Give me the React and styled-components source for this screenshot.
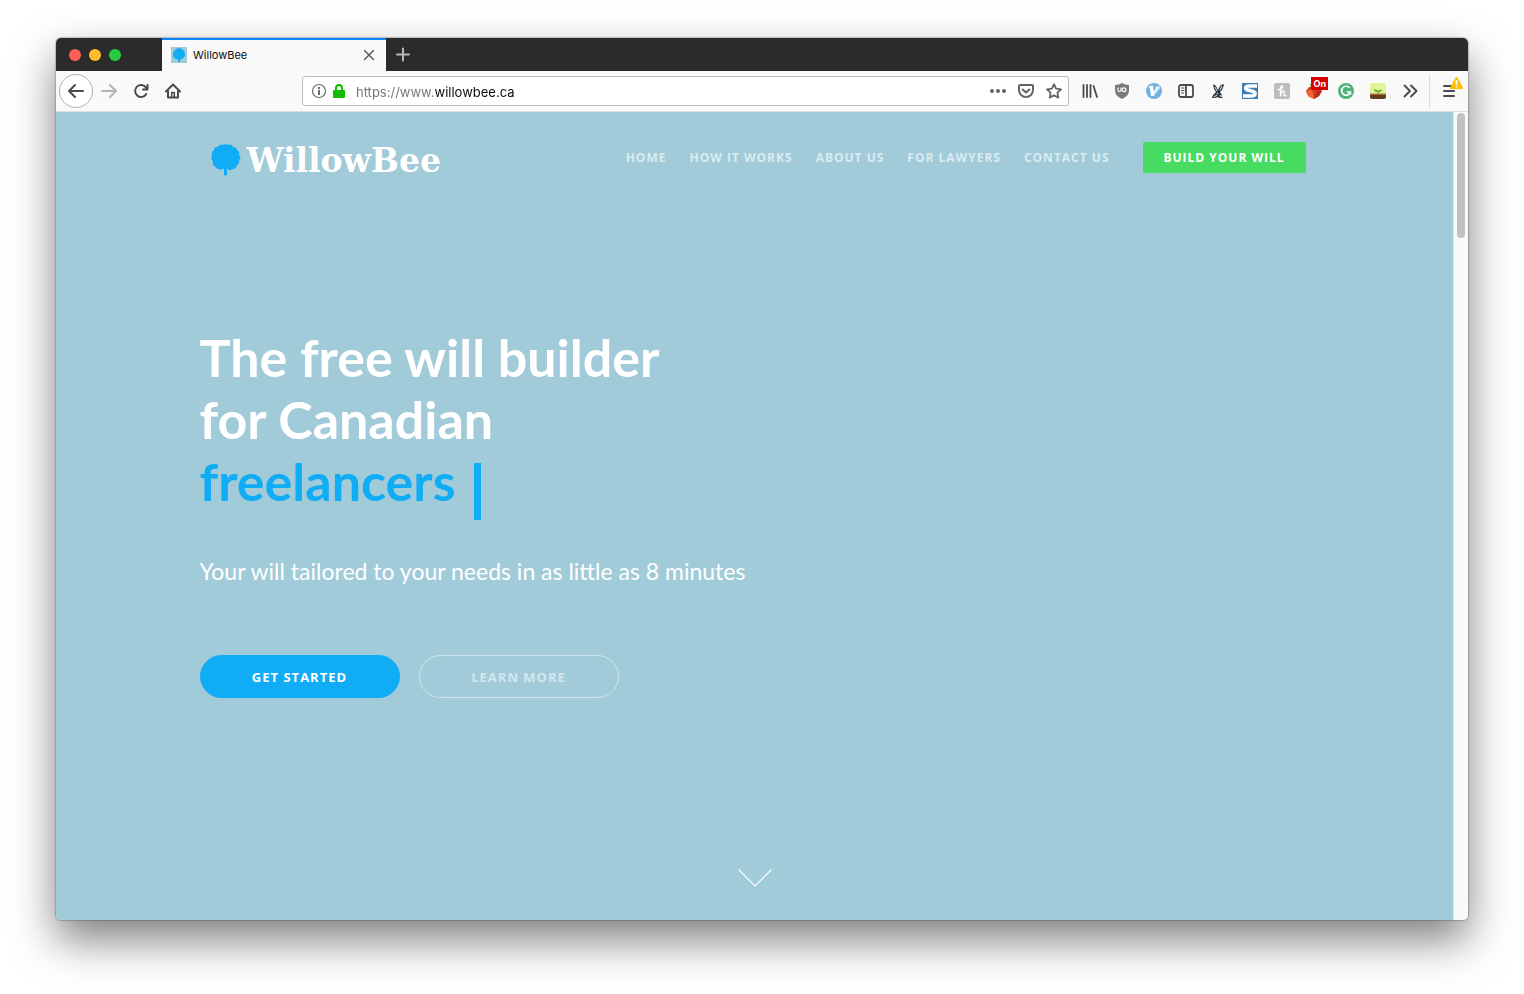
import React from "react";
import styled, { createGlobalStyle } from "styled-components";

const sky = "#a2cbd9";
const azure = "#10acf6";

const GlobalStyle = createGlobalStyle`
  *, *::before, *::after { box-sizing: border-box; }
  body { margin: 0; background: #fff; font-family: "Open Sans", sans-serif; }
  h1, p, ul { margin: 0; padding: 0; }
  button, input { font: inherit; border: 0; padding: 0; background: none; color: inherit; }
  button { cursor: pointer; }
  a { text-decoration: none; color: inherit; }
  svg { display: block; }
`;

const Desktop = styled.div`
  display: flex;
  min-height: 100vh;
  padding: 38px 56px 74px;
  overflow: hidden;
`;

const Window = styled.div`
  flex: 1;
  min-width: 0;
  display: flex;
  flex-direction: column;
  border-radius: 5px;
  overflow: hidden;
  box-shadow: 0 0 1px 1px rgba(0, 0, 0, 0.2), 0 20px 44px rgba(0, 0, 0, 0.5);
`;

const TitleBar = styled.div`
  display: flex;
  height: 33px;
  background: #2b2b2b;
`;

const Lights = styled.div`
  display: flex;
  align-items: center;
  gap: 8px;
  width: 106px;
  padding-left: 13px;
`;

const Light = styled.button`
  width: 12px;
  height: 12px;
  border-radius: 50%;
  background: ${(p) => p.$color};
`;

const Tab = styled.div`
  display: flex;
  align-items: center;
  gap: 6px;
  width: 224px;
  padding: 0 11px 2px 9px;
  border-top: 2px solid #0a84ff;
  background: #f9f9f9;
`;

const TabTitle = styled.span`
  flex: 1;
  font: 11px/16px Inter, sans-serif;
  color: #0c0c0d;
`;

const IconButton = styled.button`
  display: flex;
  align-items: center;
  justify-content: center;
  width: ${(p) => p.$size || 32}px;
  height: ${(p) => p.$size || 32}px;
  color: ${(p) => p.$color || "#4a4a4c"};
`;

const Toolbar = styled.div`
  display: flex;
  align-items: center;
  height: 41px;
  padding-left: 3px;
  background: #f9f9f9;
  border-bottom: 1px solid #dedede;
`;

const BackButton = styled(IconButton)`
  width: 34px;
  height: 34px;
  border: 1px solid #b1b1b1;
  border-radius: 50%;
  background: #fff;
`;

const AddressBar = styled.label`
  flex: 1;
  min-width: 0;
  display: flex;
  align-items: center;
  gap: 6px;
  height: 30px;
  margin: 0 5px 0 113px;
  padding: 0 6px 0 8px;
  border: 1px solid #bcbcbc;
  border-radius: 3px;
  background: #fff;
`;

const AddressInput = styled.input`
  flex: 1;
  min-width: 0;
  height: 22px;
  margin-left: 5px;
  padding-top: 2px;
  outline: 0;
  font: 13px/20px Inter, sans-serif;
  background: linear-gradient(to right, #737373 79px, #0c0c0d 79px);
  background-clip: text;
  -webkit-background-clip: text;
  -webkit-text-fill-color: transparent;
`;

const AddressActions = styled.div`
  display: flex;
  gap: 12px;
`;

const Extension = styled(IconButton)`
  position: relative;
`;

const OnBadge = styled.span`
  position: absolute;
  top: 2px;
  right: 2px;
  padding: 0 2px;
  background: #d70000;
  color: #fff;
  font: 700 9px/13px Inter, sans-serif;
`;

const MenuSlot = styled.div`
  position: relative;
  display: flex;
  align-items: center;
  height: 34px;
  margin-left: 3px;
  padding: 0 3px;
  border-left: 1px solid #dadada;
`;

const Warning = styled.svg`
  position: absolute;
  top: 3px;
  right: 5px;
`;

const Viewport = styled.div`
  flex: 1;
  display: flex;
  background: ${sky};
`;

const Page = styled.div`
  flex: 1;
  min-width: 0;
  display: flex;
  flex-direction: column;
  align-items: center;
`;

const ScrollTrack = styled.div`
  width: 15px;
  padding: 1px 3px;
  background: #fafafa;
  border-left: 1px solid #e6e6e6;
`;

const ScrollThumb = styled.div`
  width: 8px;
  height: 125px;
  border-radius: 4px;
  background: #c1c1c1;
`;

const Header = styled.header`
  display: flex;
  align-items: center;
  justify-content: space-between;
  width: 100%;
  max-width: 1110px;
  padding: 27px 4px 0 11px;
`;

const Logo = styled.a`
  display: flex;
  align-items: center;
  gap: 6px;
  color: #fff;
  font: bold 33px/40px "DejaVu Serif", serif;
`;

const LogoName = styled.span`
  padding-top: 2px;
`;

const Nav = styled.nav`
  display: flex;
  align-items: center;
  gap: 23px;
  padding-bottom: 5px;
`;

const NavLink = styled.a`
  font-weight: 700;
  font-size: 12px;
  line-height: 16px;
  letter-spacing: 1px;
  text-transform: uppercase;
  color: #d9ebf0;
`;

const BuildButton = styled.a`
  margin-left: 10px;
  width: 163px;
  border-radius: 2px;
  background: #47db62;
  color: #fff;
  font-weight: 700;
  font-size: 12px;
  line-height: 31px;
  letter-spacing: 1px;
  text-align: center;
  text-transform: uppercase;
`;

const Hero = styled.main`
  flex: 1;
  width: 100%;
  max-width: 1110px;
  padding-top: 145px;
  color: #fff;
`;

const Headline = styled.h1`
  font: 700 52px/62px Lato, sans-serif;
`;

const Typed = styled.span`
  display: flex;
  align-items: flex-start;
  gap: 18px;
  color: ${azure};
`;

const Caret = styled.span`
  width: 7px;
  height: 57px;
  margin-top: 13px;
  background: ${azure};
`;

const Tagline = styled.p`
  margin-top: 33px;
  font: 23px/36px Lato, sans-serif;
`;

const Actions = styled.div`
  display: flex;
  gap: 19px;
  margin-top: 66px;
`;

const PillButton = styled.button`
  width: 200px;
  height: 43px;
  border: 1px solid ${(p) => (p.$outline ? "#cfe5ec" : azure)};
  border-radius: 22px;
  background: ${(p) => (p.$outline ? "transparent" : azure)};
  color: ${(p) => (p.$outline ? "#d3e7ed" : "#fff")};
  font-weight: 700;
  font-size: 13px;
  line-height: 16px;
  letter-spacing: 1px;
  text-transform: uppercase;
`;

const ScrollCue = styled.a`
  padding-bottom: 32px;
`;

const Line = ({ d, size = 16, width = 2, children }) => (
  <svg width={size} height={size} viewBox="0 0 16 16" fill="none" stroke="currentColor" strokeWidth={width} strokeLinecap="round" strokeLinejoin="round">
    {d && <path d={d} />}
    {children}
  </svg>
);

const Tree = ({ width = 30, height = 32 }) => (
  <svg width={width} height={height} viewBox="0 0 30 32" fill={azure}>
    <path d="M12 1c1-1 4-1 5 0 2-1 4 0 5 2 2 0 4 1 4 3 2 1 3 3 2 5 2 1 2 4 0 5 1 2 0 4-2 5 0 2-2 4-4 4-2 1-4 2-5 0l-1-1v7q-1.500 1-3 0v-7c-1 2-4 2-5 1-2 0-4-1-4-3-2 0-3-3-2-5-2-1-2-4-1-6-1-2 0-4 2-5 0-2 2-4 4-3 1-2 3-3 5-2z" />
  </svg>
);

const Favicon = () => (
  <svg width="16" height="16" viewBox="0 0 16 16">
    <path fill={sky} d="M0 0h16v16H0z" />
    <path fill={azure} d="M8 1c2 0 3 1 4 2 2 1 2 3 2 5s-2 3-3 4l-2 .5V15H7v-2.500L4.500 12C3 11 2 10 2 8s0-4 2-5c1-1 2-2 4-2z" />
  </svg>
);

const extensions = [
  { name: "Library", icon: <Line d="M1.500 2v12M5 2v12M8.500 2v12M11.500 3l3.500 11" width={1.8} /> },
  {
    name: "uBlock Origin",
    icon: (
      <svg width="16" height="16" viewBox="0 0 16 16">
        <path fill="#7a7a7a" d="M8 0c2 1 4 2 7 2v5c0 5-3 7-7 9-4-2-7-4-7-9V2c3 0 5-1 7-2z" />
        <path fill="none" stroke="#fff" strokeWidth="1.200" d="M4 4.500V7q0 1.500 1.500 1.500T7 7V4.500" />
        <circle cx="10" cy="6.700" r="1.900" fill="none" stroke="#fff" strokeWidth="1.200" />
      </svg>
    ),
  },
  {
    name: "Vimeo helper",
    icon: (
      <svg width="16" height="16" viewBox="0 0 16 16">
        <circle cx="8" cy="8" r="8" fill="#71b1e0" />
        <path fill="#fff" d="M2.500 3.500 7 2.500l.5 6L10 5l-.5-1 4-1 .5 2-6.500 8H5L4 5.500z" />
        <path fill="#cbe3f4" d="M10.500 3.500 13.500 3l.5 2-5.500 6.500-1-1L12 5z" />
      </svg>
    ),
  },
  {
    name: "Sidebar",
    icon: (
      <Line width={1.8}>
        <rect x="1" y="2" width="14" height="12" rx="2" />
        <path d="M8 2v12" />
        <path strokeWidth="1" d="M3.500 5H6M3.500 7.500H6M3.500 10H5.500" />
      </Line>
    ),
  },
  {
    name: "Hare",
    icon: (
      <svg width="16" height="16" viewBox="0 0 16 16">
        <path fill="#31353d" d="m3 1 3 2 2 4 2-4 3-2 1 1-2 5-2 2 2 3-1 1 2 2H9l-1-1-3 1H2l1-3 3-3-2-3z" />
        <path stroke="#b9c2ca" strokeWidth="1.200" d="m5 4 2 4M12 3l-2 4M7 10l1 1M4 14l3-2M10 12l1 2" />
      </svg>
    ),
  },
  {
    name: "Scrapbook",
    icon: (
      <svg width="16" height="16" viewBox="0 0 16 16">
        <path fill="#3d7eb5" d="M0 0h16v16H0z" />
        <path fill="none" stroke="#fff" strokeWidth="3.600" d="M15 3H7.500C3 3 2.500 6 6 7l5 1.400c3.500 1 2.500 4.600-1.500 4.600H1" />
      </svg>
    ),
  },
  {
    name: "Honey",
    icon: (
      <svg width="16" height="16" viewBox="0 0 16 16">
        <rect width="16" height="16" rx="2" fill="#bdbdbd" />
        <path fill="none" stroke="#fff" strokeWidth="1.300" strokeLinecap="round" strokeLinejoin="round" d="M4 6.500c2 .5 4-.5 4.500-2.500S6.500 2.500 6.500 5v8C7 10 8 8 9.300 8s.7 2.500.7 4 1 1 2 .3" />
      </svg>
    ),
  },
  {
    name: "Origami fox",
    badge: "On",
    icon: (
      <svg width="16" height="16" viewBox="0 0 16 16">
        <path fill="#d63b1c" d="m0 8 3-4 9-1 4 5-3 5-5 3-6-3z" />
        <path fill="#ef6535" d="m0 8 6-2 2 10-6-3z" />
        <path fill="#b52d19" d="m8 16 5-3 3-5-5-1z" />
        <path fill="#4da148" d="M4 1h5v4L5 4z" />
      </svg>
    ),
  },
  {
    name: "Grammar check",
    icon: (
      <svg width="16" height="16" viewBox="0 0 16 16">
        <circle cx="8" cy="8" r="8" fill="#4fb276" />
        <path fill="none" stroke="#fff" strokeWidth="1.700" d="M11.500 4.800A4.500 4.500 0 1 0 12.400 9H8.700M12.400 8.200v3.500" />
      </svg>
    ),
  },
  {
    name: "Garden",
    icon: (
      <svg width="16" height="16" viewBox="0 0 16 16">
        <rect width="16" height="16" rx="2" fill="#dff59a" />
        <path fill="#683b18" d="M0 11h16v3q0 2-2 2H2q-2 0-2-2z" />
        <path fill="#a17132" d="M0 10.500h16V12H0z" />
        <path fill="#68a630" d="M7.500 11V9C5 9 4 8 3.500 6.500c2 0 3.500.3 4.500 1.500 1-1 2.500-1.500 4-1C11.500 8.500 10.500 9 8.500 9v2z" />
      </svg>
    ),
  },
  { name: "More tools", icon: <Line d="m2.500 2.500 5.500 5.500-5.500 5.500M9 2.500 14.500 8 9 13.500" width={1.9} /> },
];

const links = ["Home", "How it works", "About us", "For lawyers", "Contact us"];

export default function App() {
  return (
    <Desktop>
      <GlobalStyle />
      <Window>
        <TitleBar>
          <Lights>
            <Light $color="#ff5f57" aria-label="Close window" />
            <Light $color="#ffbd2e" aria-label="Minimize window" />
            <Light $color="#28ca41" aria-label="Zoom window" />
          </Lights>
          <Tab>
            <Favicon />
            <TabTitle>WillowBee</TabTitle>
            <IconButton $size={12} $color="#5a5a5b" aria-label="Close tab">
              <Line d="m2 2 12 12M14 2 2 14" size={12} />
            </IconButton>
          </Tab>
          <IconButton $size={34} $color="#b8b8b8" aria-label="New tab">
            <Line d="M2 7.500h12M8 1.500v12" />
          </IconButton>
        </TitleBar>
        <Toolbar>
          <BackButton aria-label="Back">
            <Line d="M15 8H1.500M7 2 1 8l6 6" />
          </BackButton>
          <IconButton $color="#b4b4b5" aria-label="Forward">
            <Line d="M1 8h13.500M9 2l6 6-6 6" />
          </IconButton>
          <IconButton aria-label="Reload">
            <Line d="M13.300 11A6 6 0 1 1 13 4.500L14.500 6.500H10M14.500 2v4.500" />
          </IconButton>
          <IconButton aria-label="Home page">
            <Line d="M1 8.500 8 1.500l7 7M3 8v6.500h10V8">
              <path strokeWidth="1.500" d="M6.700 14V9.500h2.600V14" />
            </Line>
          </IconButton>
          <AddressBar>
            <Line width={1.2}>
              <circle cx="8" cy="8" r="6.500" stroke="#6b6b6c" />
              <path stroke="#6b6b6c" strokeWidth="2" strokeLinecap="butt" d="M8 7v5M8 4v2" />
            </Line>
            <svg width="12" height="16" viewBox="0 0 12 16">
              <path fill="#12bc00" d="M0 8q0-1 1-1h10q1 0 1 1v6q0 1-1 1H1q-1 0-1-1z" />
              <path fill="none" stroke="#12bc00" strokeWidth="2" d="M3 8V5a3 3 0 0 1 6 0v3" />
            </svg>
            <AddressInput aria-label="Address" defaultValue="https://www.willowbee.ca" />
            <AddressActions>
              <IconButton $size={16} $color="#646465" aria-label="Page actions">
                <svg width="16" height="16" viewBox="0 0 16 16" fill="currentColor">
                  <circle cx="2" cy="8" r="2" />
                  <circle cx="8" cy="8" r="2" />
                  <circle cx="14" cy="8" r="2" />
                </svg>
              </IconButton>
              <IconButton $size={16} $color="#646465" aria-label="Save to Pocket">
                <Line d="M2 2h12q1 0 1 1v4a7 7 0 0 1-14 0V3q0-1 1-1zM4.700 6.500 8 9.600l3.300-3.100" />
              </IconButton>
              <IconButton $size={16} $color="#646465" aria-label="Bookmark">
                <Line d="m8 1.200 2.100 4.500 4.900.6-3.600 3.400.9 4.900L8 12.200l-4.300 2.400.9-4.900L1 6.300l4.900-.6z" width={1.8} />
              </IconButton>
            </AddressActions>
          </AddressBar>
          {extensions.map((e) => (
            <Extension key={e.name} aria-label={e.name}>
              {e.icon}
              {e.badge && <OnBadge>{e.badge}</OnBadge>}
            </Extension>
          ))}
          <MenuSlot>
            <IconButton aria-label="Open menu">
              <Line d="M3 3h10M3 8h10M3 13h10" />
            </IconButton>
            <Warning width="13" height="12" viewBox="0 0 13 12">
              <path fill="#ffbf00" stroke="#ffbf00" strokeWidth="2" strokeLinejoin="round" d="M6.500 1 12 11H1z" />
              <path fill="#fff" d="M5.700 3h1.600v5H5.700zM5.700 9h1.600v1.500H5.700z" />
            </Warning>
          </MenuSlot>
        </Toolbar>
        <Viewport>
          <Page>
            <Header>
              <Logo href="#home">
                <Tree />
                <LogoName>WillowBee</LogoName>
              </Logo>
              <Nav>
                {links.map((l) => (
                  <NavLink key={l} href="#">{l}</NavLink>
                ))}
                <BuildButton href="#build">Build your will</BuildButton>
              </Nav>
            </Header>
            <Hero>
              <Headline>
                The free will builder
                <br />
                for Canadian
                <Typed>
                  freelancers
                  <Caret />
                </Typed>
              </Headline>
              <Tagline>Your will tailored to your needs in as little as 8 minutes</Tagline>
              <Actions>
                <PillButton>Get started</PillButton>
                <PillButton $outline>Learn more</PillButton>
              </Actions>
            </Hero>
            <ScrollCue href="#more" aria-label="Scroll down">
              <svg width="34" height="20" viewBox="0 0 34 20" fill="none" stroke="#fff" strokeWidth="1.200">
                <path d="m.5 1.500 16.500 16.500L33.500 1.500" />
              </svg>
            </ScrollCue>
          </Page>
          <ScrollTrack>
            <ScrollThumb />
          </ScrollTrack>
        </Viewport>
      </Window>
    </Desktop>
  );
}
